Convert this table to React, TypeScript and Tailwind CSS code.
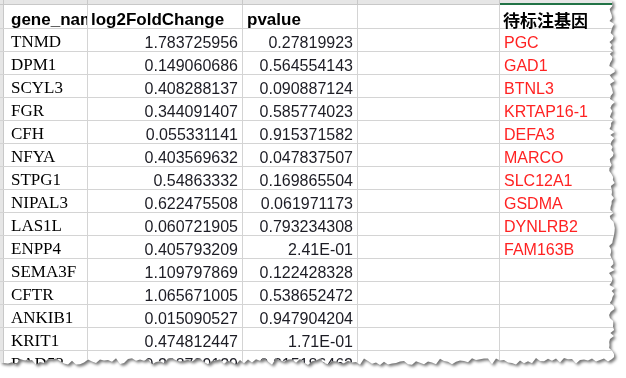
const rows: [string, string, string, string?][] = [
  ["TNMD", "1.783725956", "0.27819923", "PGC"],
  ["DPM1", "0.149060686", "0.564554143", "GAD1"],
  ["SCYL3", "0.408288137", "0.090887124", "BTNL3"],
  ["FGR", "0.344091407", "0.585774023", "KRTAP16-1"],
  ["CFH", "0.055331141", "0.915371582", "DEFA3"],
  ["NFYA", "0.403569632", "0.047837507", "MARCO"],
  ["STPG1", "0.54863332", "0.169865504", "SLC12A1"],
  ["NIPAL3", "0.622475508", "0.061971173", "GSDMA"],
  ["LAS1L", "0.060721905", "0.793234308", "DYNLRB2"],
  ["ENPP4", "0.405793209", "2.41E-01", "FAM163B"],
  ["SEMA3F", "1.109797869", "0.122428328"],
  ["CFTR", "1.065671005", "0.538652472"],
  ["ANKIB1", "0.015090527", "0.947904204"],
  ["KRIT1", "0.474812447", "1.71E-01"],
  ["RAD52", "0.298729129", "0.215186462"],
];

// jagged "torn paper" outline for the right and bottom edges
function tornPath() {
  let seed = 7;
  const rnd = () => {
    seed = (seed * 9301 + 49297) % 233280;
    return seed / 233280;
  };
  const pts: string[] = ["0px 0px", "612px 0px"];
  for (let y = 3; y < 360; y += 3) {
    pts.push(`${(609 + rnd() * 6).toFixed(1)}px ${y}px`);
  }
  for (let x = 612; x > 0; x -= 4) {
    pts.push(`${x}px ${(358 + rnd() * 7).toFixed(1)}px`);
  }
  pts.push("0px 362px");
  return `polygon(${pts.join(",")})`;
}

const sans = "font-['Liberation_Sans','Noto_Sans_CJK_SC',sans-serif]";

export default function App() {
  return (
    <div className="w-[626px] h-[378px] bg-white overflow-hidden">
      <div className="[filter:drop-shadow(2px_2px_1.5px_rgba(0,0,0,0.55))]">
        <div className="w-[616px] h-[366px] bg-white overflow-hidden" style={{ clipPath: tornPath() }}>
          {/* column header strip */}
          <div className="flex h-[5px] bg-[#e6e6e6] border-b border-[#c8c8c8]">
            <div className="w-[4px] border-r border-[#c8c8c8]" />
            <div className="w-[84px] border-r border-[#c8c8c8]" />
            <div className="w-[155px] border-r border-[#c8c8c8]" />
            <div className="w-[115px] border-r border-[#c8c8c8]" />
            <div className="w-[142px] border-r border-[#c8c8c8]" />
            <div className="flex-1 relative">
              <div className="absolute left-0 right-0 -bottom-[1px] h-[2px] bg-[#217346]" />
            </div>
          </div>

          <div className={`flex h-[24px] border-b border-[#d4d4d4] text-[17px] font-bold leading-none text-black ${sans}`}>
            <div className="w-[4px] bg-[#e6e6e6] border-r border-[#c8c8c8]" />
            <div className="w-[84px] border-r border-[#d4d4d4] overflow-hidden whitespace-nowrap flex items-end pl-[7px]">
              gene_name
            </div>
            <div className="w-[155px] border-r border-[#d4d4d4] flex items-end pl-[3px]">log2FoldChange</div>
            <div className="w-[115px] border-r border-[#d4d4d4] flex items-end pl-[4px]">pvalue</div>
            <div className="w-[142px] border-r border-[#d4d4d4]" />
            <div className="flex-1 flex items-end pl-[3px] font-['Noto_Sans_CJK_SC',sans-serif] text-[17px]">
              待标注基因
            </div>
          </div>

          {rows.map(([gene, fc, p, tag]) => (
            <div key={gene} className="flex h-[23px] border-b border-[#d4d4d4] leading-none">
              <div className="w-[4px] bg-[#e6e6e6] border-r border-[#c8c8c8]" />
              <div className="w-[84px] border-r border-[#d4d4d4] flex items-end pl-[7px] pb-[1px] font-['Liberation_Serif',serif] text-[17px] text-black">
                {gene}
              </div>
              <div className={`w-[155px] border-r border-[#d4d4d4] flex items-end justify-end pr-[4px] text-[16px] text-[#1c1c24] ${sans}`}>
                {fc}
              </div>
              <div className={`w-[115px] border-r border-[#d4d4d4] flex items-end justify-end pr-[4px] text-[16px] text-[#1c1c24] ${sans}`}>
                {p}
              </div>
              <div className="w-[142px] border-r border-[#d4d4d4]" />
              <div className={`flex-1 flex items-end pl-[4px] text-[16px] text-[#ff2222] ${sans}`}>{tag}</div>
            </div>
          ))}
        </div>
      </div>
    </div>
  );
}
